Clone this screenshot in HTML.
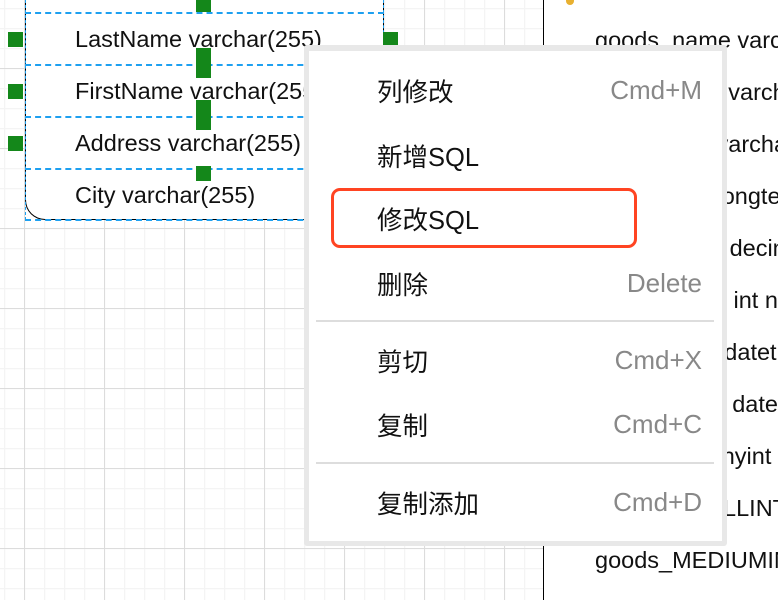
<!DOCTYPE html>
<html><head><meta charset="utf-8"><style>
*{margin:0;padding:0;box-sizing:border-box}
body{width:778px;height:600px;overflow:hidden;position:relative;background:#fff;font-family:"Liberation Sans","Noto Sans CJK SC",sans-serif}
.g{position:absolute;}
.ent{position:absolute;left:25px;top:-2px;width:359px;height:222px;background:#fff;border-left:1px solid #000;border-bottom:1px solid #000;border-right:1px dashed #000;border-bottom-left-radius:20px}
.dash{position:absolute;left:25px;width:359px;border-top:2px dashed #1ea0f0}
.vdash{position:absolute;top:0;height:220px;border-left:1px dashed #1ea0f0}
.row{position:absolute;left:75px;font-size:23.5px;color:#111;white-space:nowrap}
.sq{position:absolute;background:#14871a;width:15px;height:15px}
.clip{position:absolute;left:545px;top:0;width:233px;height:600px;overflow:hidden}
.rt{position:absolute;left:50px;font-size:23.5px;color:#111;white-space:nowrap}
.menu{position:absolute;left:304px;top:45px;width:423px;height:501px;background:#e8e8e8;border-radius:3px}
.mi{position:absolute;left:309px;top:51px;width:413px;height:490px;background:#fff}
.it{position:absolute;left:68px;font-size:25.5px;color:#111;white-space:nowrap}
.sc{position:absolute;right:20px;font-size:26px;color:#888}
.sep{position:absolute;left:7px;width:398px;border-top:2px solid #ddd}
.red{position:absolute;left:331px;top:188px;width:306px;height:60px;border:3px solid #ff4422;border-radius:9px}
</style></head><body>
<svg class="g" width="544" height="600" style="left:0;top:0">
<defs>
<pattern id="mn" x="4" y="8" width="20" height="20" patternUnits="userSpaceOnUse"><path d="M0 0.5H20M0.5 0V20" stroke="#f4f4f4" stroke-width="1.5" fill="none"/></pattern>
<pattern id="mj" x="24" y="68" width="80" height="80" patternUnits="userSpaceOnUse"><path d="M0 0.5H80M0.5 0V80" stroke="#dcdcdc" stroke-width="1" fill="none"/></pattern>
</defs>
<rect width="544" height="600" fill="url(#mn)"/>
<rect width="544" height="600" fill="url(#mj)"/>
<rect x="543" y="0" width="2" height="600" fill="#000"/>
</svg>
<div class="ent"></div>
<div class="vdash" style="left:25px"></div>
<div class="vdash" style="left:383px"></div>
<div class="dash" style="top:12px"></div>
<div class="dash" style="top:64px"></div>
<div class="dash" style="top:116px"></div>
<div class="dash" style="top:168px"></div>
<div class="dash" style="top:219px"></div>
<div class="row" style="top:26px">LastName varchar(255)</div>
<div class="row" style="top:78px">FirstName varchar(255)</div>
<div class="row" style="top:130px">Address varchar(255)</div>
<div class="row" style="top:182px">City varchar(255)</div>
<div class="sq" style="left:8px;top:32px"></div>
<div class="sq" style="left:8px;top:84px"></div>
<div class="sq" style="left:8px;top:136px"></div>
<div class="sq" style="left:383px;top:32px"></div>
<div class="sq" style="left:196px;top:0;height:12px"></div>
<div class="sq" style="left:196px;top:48px;height:30px"></div>
<div class="sq" style="left:196px;top:100px;height:30px"></div>
<div class="sq" style="left:196px;top:166px"></div>
<div class="clip">
<div style="position:absolute;left:21px;top:0;width:8px;height:5px;background:#e8b030;border-radius:0 0 4px 4px"></div>
<div class="rt" style="top:27px">goods_name varchar(255)</div>
<div class="rt" style="top:79px">goods_desc varchar(255)</div>
<div class="rt" style="top:131px">goods_info varchar(255)</div>
<div class="rt" style="top:183px">goods_text longtext</div>
<div class="rt" style="top:235px">goods_price decimal</div>
<div class="rt" style="top:287px">goods_stock int not null</div>
<div class="rt" style="top:339px">create_time datetime</div>
<div class="rt" style="top:391px">update_date date</div>
<div class="rt" style="top:443px">goods_flat tinyint</div>
<div class="rt" style="top:495px">goods_SMALLINT</div>
<div class="rt" style="top:547px">goods_MEDIUMINT</div>
</div>
<div class="menu"></div>
<div class="mi">
<div class="it" style="top:21px">列修改</div><div class="sc" style="top:24px">Cmd+M</div>
<div class="it" style="top:86px">新增SQL</div>
<div class="it" style="top:149px">修改SQL</div>
<div class="it" style="top:214px">删除</div><div class="sc" style="top:217px">Delete</div>
<div class="sep" style="top:269px"></div>
<div class="it" style="top:291px">剪切</div><div class="sc" style="top:294px">Cmd+X</div>
<div class="it" style="top:355px">复制</div><div class="sc" style="top:358px">Cmd+C</div>
<div class="sep" style="top:411px"></div>
<div class="it" style="top:433px">复制添加</div><div class="sc" style="top:436px">Cmd+D</div>
</div>
<div class="red"></div>
</body></html>
